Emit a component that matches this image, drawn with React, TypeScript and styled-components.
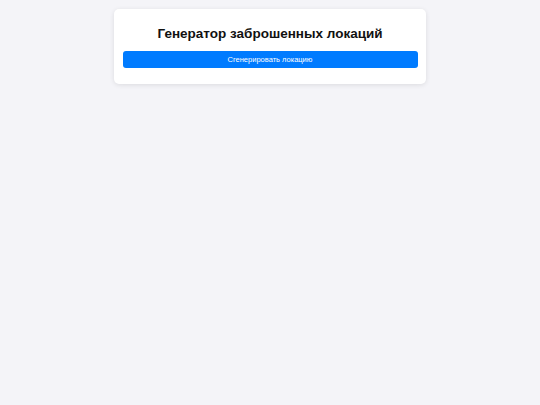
import styled, { createGlobalStyle } from "styled-components";

const GlobalStyle = createGlobalStyle`
  html, body {
    margin: 0;
    padding: 0;
    background: #f4f4f8;
    font-family: "Liberation Sans", Arial, sans-serif;
  }
`;

const Page = styled.div`
  min-height: 405px;
  padding-top: 9px;
  box-sizing: border-box;
`;

const Card = styled.div`
  width: 312px;
  margin: 0 auto;
  padding: 17px 8.5px 16px;
  box-sizing: border-box;
  background: #ffffff;
  border-radius: 5px;
  box-shadow: 0 1px 5px rgba(0, 0, 0, 0.1);
`;

const Title = styled.h1`
  margin: 0 0 9px;
  font-size: 13.5px;
  line-height: 16px;
  font-weight: 700;
  color: #111111;
  text-align: center;
`;

const GenerateButton = styled.button`
  display: block;
  width: 100%;
  height: 17px;
  padding: 0;
  border: none;
  border-radius: 3px;
  background: #007bff;
  color: #ffffff;
  font-family: "Liberation Sans", Arial, sans-serif;
  font-size: 7.5px;
  cursor: pointer;
`;

export default function App() {
  return (
    <>
      <GlobalStyle />
      <Page>
        <Card>
          <Title>Генератор заброшенных локаций</Title>
          <GenerateButton>Сгенерировать локацию</GenerateButton>
        </Card>
      </Page>
    </>
  );
}
